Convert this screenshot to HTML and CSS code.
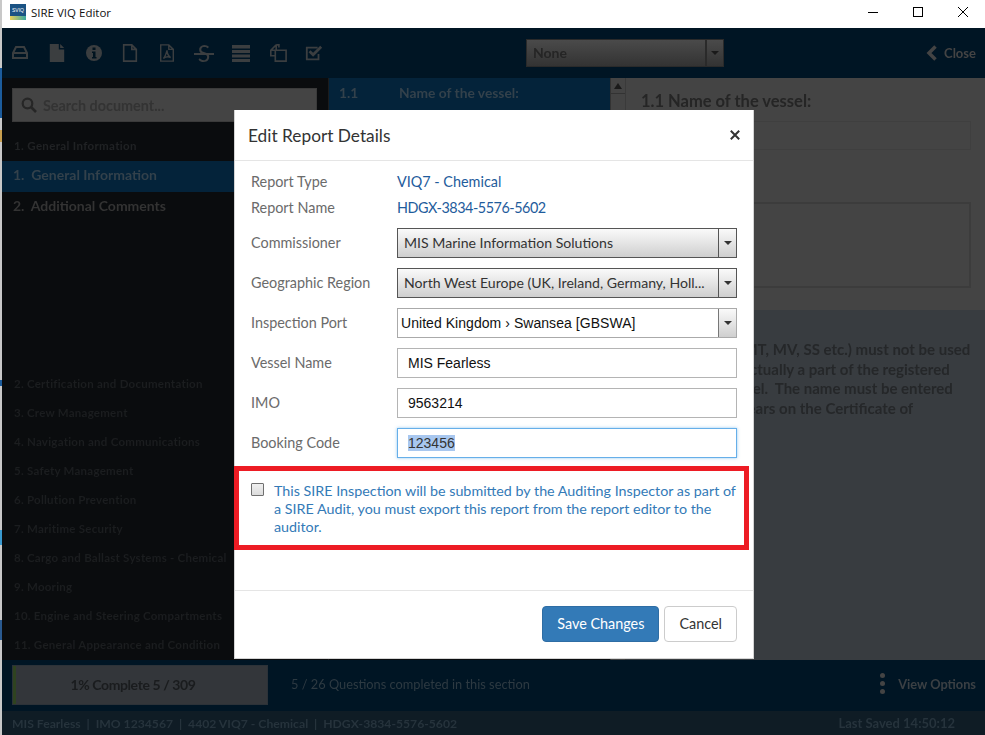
FILE: index.html
```html
<!DOCTYPE html>
<html lang="en">
<head>
<meta charset="utf-8">
<title>SIRE VIQ Editor</title>
<link rel="stylesheet" href="styles.css">
</head>
<body>
<div class="window">
  <div class="edge"></div>
  <div class="main">
    <header class="titlebar">
      <div class="logo"><span class="logo-text">SVIQ</span><span class="logo-swoosh"></span></div>
      <span class="app-title">SIRE VIQ Editor</span>
      <div class="win-controls">
        <span class="win-btn"><svg width="10" height="10" viewBox="0 0 10 10"><path d="M0 5.500h10" stroke="#000" fill="none"/></svg></span>
        <span class="win-btn"><svg width="10" height="10" viewBox="0 0 10 10"><rect x=".5" y=".5" width="9" height="9" stroke="#000" fill="none"/></svg></span>
        <span class="win-btn"><svg width="10" height="10" viewBox="0 0 10 10"><path d="M0 0l10 10M10 0L0 10" stroke="#000" stroke-width="1" fill="none"/></svg></span>
      </div>
    </header>
    <div class="app">
      <div class="toolbar">
        <div class="tools">
          <svg class="tool" viewBox="0 0 18 18"><path d="M5 3h8l3 6v5H2V9z M3 9h12" fill="none" stroke="#444" stroke-width="2"/></svg>
          <svg class="tool" viewBox="0 0 18 20"><path d="M1 0h10v6h6v14H1z M12.500 0l4.500 4.500h-4.500z" fill="#444"/></svg>
          <svg class="tool" viewBox="0 0 18 18"><circle cx="9" cy="9" r="8" fill="#444"/><path d="M7.500 3.500h3V6h-3z M7 7.500h3.500V13h1v1.500H7V13h1V9H7z" fill="#00131f"/></svg>
          <svg class="tool" viewBox="0 0 18 20"><path d="M2 1h9l5 5v13H2z M11 1v5h5" fill="none" stroke="#444" stroke-width="1.800"/></svg>
          <svg class="tool" viewBox="0 0 18 20"><path d="M2 1h9l5 5v13H2z M11 1v5h5 M9 7c-1 4-2 7-4 9 3-2 6-2 8-1-3-2-4-5-4-8z" fill="none" stroke="#444" stroke-width="1.600"/></svg>
          <span class="tool-s">S</span>
          <svg class="tool" viewBox="0 0 18 18"><path d="M0 1h18v3.500H0z M0 6h18v3H0z M0 10.500h18v3H0z M0 15h18v3H0z" fill="#444"/></svg>
          <svg class="tool" viewBox="0 0 20 20"><path d="M8 1L2 7v6h5 M8 1v6H2 M8 1h3v3 M8 7h11v12H7V7" fill="none" stroke="#444" stroke-width="1.800"/></svg>
          <svg class="tool" viewBox="0 0 20 18"><path d="M15 10v6H2V3h12" fill="none" stroke="#444" stroke-width="2"/><path d="M5 7l4 4 9-9" fill="none" stroke="#444" stroke-width="3"/></svg>
        </div>
        <div class="filter"><span class="filter-value">None</span><span class="filter-arrow"><span class="caret caret-dark"></span></span></div>
        <div class="close-link">
          <svg width="12" height="16" viewBox="0 0 12 16"><path d="M9.500 1.500L3 8l6.500 6.500" fill="none" stroke="#444" stroke-width="3.500"/></svg>
          <span>Close</span>
        </div>
      </div>
      <div class="workspace">
        <aside class="sidebar">
          <div class="search">
            <svg width="16" height="16" viewBox="0 0 16 16"><circle cx="6.500" cy="6.500" r="4.800" fill="none" stroke="#262626" stroke-width="2.200"/><path d="M10 10l5 5" stroke="#262626" stroke-width="2.600"/></svg>
            <span>Search document...</span>
          </div>
          <div class="chapter-head">1. General Information</div>
          <div class="section active">1.&nbsp; General Information</div>
          <div class="section">2.&nbsp; Additional Comments</div>
          <ul class="chapters">
            <li>2. Certification and Documentation</li>
            <li>3. Crew Management</li>
            <li>4. Navigation and Communications</li>
            <li>5. Safety Management</li>
            <li>6. Pollution Prevention</li>
            <li>7. Maritime Security</li>
            <li>8. Cargo and Ballast Systems - Chemical</li>
            <li>9. Mooring</li>
            <li>10. Engine and Steering Compartments</li>
            <li>11. General Appearance and Condition</li>
          </ul>
        </aside>
        <section class="questions">
          <div class="question-list">
            <div class="question-row"><span class="q-num">1.1</span><span>Name of the vessel:</span></div>
          </div>
          <div class="scrollbar"><span class="scroll-btn"><span class="caret caret-up"></span></span><span class="scroll-track"></span></div>
        </section>
        <section class="detail">
          <div class="detail-top">
            <h2 class="detail-title">1.1 Name of the vessel:</h2>
            <div class="answer"></div>
            <div class="comment"></div>
          </div>
          <div class="guidance">Ship's prefixes (MT, MV, SS etc.) must not be used<br>unless a title is actually a part of the registered<br>name of the vessel.&nbsp; The name must be entered<br>exactly as it appears on the Certificate of<br>Registry.</div>
        </section>
      </div>
      <div class="progress-bar">
        <div class="progress"><span class="progress-fill"></span><span class="progress-text">1% Complete 5 / 309</span></div>
        <span class="progress-note">5 / 26 Questions completed in this section</span>
        <div class="view-options"><span class="dots"><i></i><i></i><i></i></span><span>View Options</span></div>
      </div>
      <footer class="status">
        <span class="status-path">MIS Fearless &nbsp;|&nbsp; IMO 1234567 &nbsp;|&nbsp; 4402 VIQ7 - Chemical &nbsp;|&nbsp; HDGX-3834-5576-5602</span>
        <span>Last Saved 14:50:12</span>
      </footer>
    </div>
  </div>
</div>

<div class="modal">
  <div class="modal-head">
    <h1 class="modal-title">Edit Report Details</h1>
    <svg class="modal-close" width="10" height="10" viewBox="0 0 10 10"><path d="M.8.8l8.400 8.400M9.200.8L.8 9.200" stroke="#333" stroke-width="2" fill="none"/></svg>
  </div>
  <div class="modal-body">
    <div class="info-row"><span class="label">Report Type</span><span class="info-value">VIQ7 - Chemical</span></div>
    <div class="info-row"><span class="label">Report Name</span><span class="info-value code">HDGX-3834-5576-5602</span></div>
    <div class="form-row first"><span class="label">Commissioner</span>
      <div class="select"><span class="select-value">MIS Marine Information Solutions</span><span class="select-arrow"><span class="caret"></span></span></div></div>
    <div class="form-row"><span class="label">Geographic Region</span>
      <div class="select"><span class="select-value">North West Europe (UK, Ireland, Germany, Holl...</span><span class="select-arrow"><span class="caret"></span></span></div></div>
    <div class="form-row"><span class="label">Inspection Port</span>
      <div class="select combo"><span class="select-value">United Kingdom › Swansea [GBSWA]</span><span class="select-arrow"><span class="caret"></span></span></div></div>
    <div class="form-row"><span class="label">Vessel Name</span><div class="field">MIS Fearless</div></div>
    <div class="form-row"><span class="label">IMO</span><div class="field">9563214</div></div>
    <div class="form-row"><span class="label">Booking Code</span><div class="field focus"><span class="selected">123456</span></div></div>
    <div class="audit-box">
      <span class="checkbox"></span>
      <p class="audit-text">This SIRE Inspection will be submitted by the Auditing Inspector as part of a SIRE Audit, you must export this report from the report editor to the auditor.</p>
    </div>
  </div>
  <div class="modal-foot">
    <button class="btn btn-primary">Save Changes</button>
    <button class="btn">Cancel</button>
  </div>
</div>
</body>
</html>
```
FILE: styles.css
```css
* { box-sizing: border-box; }
html, body { margin: 0; height: 100%; overflow: hidden; }
body { font-family: "Lato", "Open Sans", sans-serif; font-size: 14.400px; background: #fff; }

.window { display: flex; width: 985px; height: 735px; }
.edge {
  width: 2px;
  background: linear-gradient(#c8c8c8 0 68px, #1c5c9c 68px 118px, #c8c8c8 118px 130px, #c9a050 130px 142px, #c8c8c8 142px 380px, #1c5c9c 380px 386px, #c8c8c8 386px 530px, #3a9ad0 530px 545px, #c8c8c8 545px 620px, #2a5a90 620px 640px, #c8c8c8 640px);
}
.main { flex: 1; display: flex; flex-direction: column; min-width: 0; }

/* Title bar */
.titlebar { height: 28px; display: flex; align-items: center; background: #fff; padding: 0 0 4px 8px; font-family: "Open Sans", sans-serif; }
.logo { position: relative; width: 16px; height: 16px; background: #1b5384; overflow: hidden; margin-right: 5px; }
.logo-text { display: block; font: 5px/12px "Liberation Sans", sans-serif; color: #fff; text-align: center; }
.logo-swoosh { display: block; height: 4px; background: linear-gradient(90deg, #e8cf5a, #38a8a0); }
.app-title { font-size: 11.500px; color: #111; }
.win-controls { margin-left: auto; display: flex; }
.win-btn { width: 45px; height: 24px; display: flex; align-items: center; justify-content: center; }

/* App */
.app { flex: 1; display: flex; flex-direction: column; min-height: 0; filter: blur(.55px); background: #001524; }
.toolbar { height: 50px; display: flex; align-items: center; background: #001524; padding: 0 9px 0 9px; }
.tools { display: flex; align-items: center; width: 515px; opacity: .88; }
.tool { width: 18px; height: 18px; margin-right: 18.800px; flex: none; }
.tool-s { position: relative; width: 18px; margin-right: 18.800px; font: 400 23px/18px "Lato", sans-serif; color: #444; text-align: center; }
.tool-s::after { content: ""; position: absolute; left: -1px; right: -1px; top: 9px; height: 2px; background: #444; }
.filter { width: 198px; height: 28px; display: flex; border: 1px solid #2a2a2a; background: linear-gradient(#4a4a4a, #333); color: #252525; }
.filter-value { flex: 1; padding-left: 6px; line-height: 26px; font-weight: 700; font-size: 14px; }
.filter-arrow { width: 18px; display: flex; align-items: center; justify-content: center; border-left: 2px solid #2a2a2a; }
.close-link { margin-left: auto; display: flex; align-items: center; gap: 6px; color: #444; font-weight: 700; font-size: 13px; }

.workspace { flex: 1; display: grid; grid-template-columns: 326px 297px 1fr; min-height: 0; }

/* Sidebar */
.sidebar { background: #0a0c0e; display: flex; flex-direction: column; min-height: 0; }
.search { margin: 10px 11px 0 10px; height: 34px; background: #444; border: 1px solid #3a3a3a; display: flex; align-items: center; gap: 6px; padding-left: 8px; color: #333; font-size: 14.400px; font-weight: 700; }
.chapter-head { margin-top: 15px; height: 24px; padding-left: 12px; line-height: 18px; font-size: 11.500px; font-weight: 700; color: #202224; letter-spacing: .35px; }
.section { height: 31px; padding-left: 11px; line-height: 28px; font-size: 14px; font-weight: 700; color: #333; }
.section.active { background: #04233a; color: #33414b; }
.chapters { list-style: none; margin: auto 0 0; padding: 0; }
.chapters li { height: 29px; padding-left: 12px; line-height: 28px; font-size: 11.500px; font-weight: 700; color: #1b1d1f; letter-spacing: .25px; white-space: nowrap; }

/* Questions */
.questions { display: flex; background: #0a0c0e; border-left: 1px solid #1c1c1c; }
.question-list { flex: 1; }
.question-row { height: 32px; display: flex; align-items: center; padding: 0 0 3px 10px; background: #04233a; color: #33414b; font-size: 13.800px; font-weight: 700; }
.q-num { width: 60px; }
.scrollbar { width: 15px; display: flex; flex-direction: column; background: #444; border-left: 1px solid #333; }
.scroll-btn { height: 16px; display: flex; align-items: center; justify-content: center; border-bottom: 1px solid #333; }
.scroll-track { flex: 1; }

/* Detail */
.detail { background: #444; display: flex; flex-direction: column; border-left: 1px solid #3a3a3a; }
.detail-top { height: 232px; padding: 13px 14px 0 15px; flex: none; }
.detail-title { margin: 0; font-size: 16.500px; line-height: 20px; font-weight: 700; color: #252525; white-space: nowrap; }
.answer { margin-top: 10px; height: 29px; border: 1px solid #3f3f3f; }
.comment { margin-top: 52px; height: 86px; border: 2px solid #3c3c3c; }
.guidance { flex: 1; background: #383c40; padding: 30px 0 0 15px; color: #252729; font-size: 15px; font-weight: 700; line-height: 19.500px; white-space: nowrap; overflow: hidden; }

/* Progress */
.progress-bar { height: 51px; display: flex; align-items: center; background: #001524; padding: 0 9px 0 10px; color: #2d3a42; font-size: 12.800px; }
.progress { width: 256px; height: 40px; margin-top: -2px; padding-right: 14px; position: relative; display: flex; align-items: center; justify-content: center; background: #33363a; border: 1px solid #2c3238; }
.progress-fill { position: absolute; left: 0; top: 0; bottom: 0; width: 3px; background: #2f4320; }
.progress-text { font-weight: 700; color: #1a1c1e; font-size: 14px; letter-spacing: -.4px; margin-top: -1px; }
.progress-note { margin-left: 23px; margin-top: -4px; }
.view-options { margin-left: auto; margin-top: -4px; display: flex; align-items: center; gap: 13px; color: #3b4044; font-weight: 700; font-size: 12.800px; }
.dots { display: flex; flex-direction: column; gap: 3px; }
.dots i { display: block; width: 5px; height: 5px; border-radius: 50%; background: #444; }
.status { height: 24px; display: flex; justify-content: space-between; align-items: center; padding: 0 30px 0 10px; background: #0f1c25; color: #26333c; font-size: 13px; font-weight: 700; }
.status-path { font-size: 12.200px; }

/* Carets */
.caret { width: 0; height: 0; border-left: 4px solid transparent; border-right: 4px solid transparent; border-top: 4px solid #333; }
.caret-dark { border-top-color: #1a1a1a; }
.caret-up { border-top: 0; border-bottom: 6px solid #1a1a1a; }

/* Modal */
.modal { position: absolute; left: 234px; top: 110px; width: 520px; height: 549px; background: #fff; border: 1px solid #d4d4d4; border-top: 0; display: flex; flex-direction: column; }
.modal-head { height: 51px; flex: none; display: flex; align-items: center; justify-content: space-between; padding: 0 13px 0 13px; border-bottom: 1px solid #e5e5e5; }
.modal-title { margin: 0; font-size: 17.300px; font-weight: 400; color: #333; }
.modal-body { flex: 1; padding: 8px 16px 0; }
.label { width: 146px; flex: none; color: #6b6b6b; padding-bottom: 2px; }
.info-row { height: 26px; display: flex; align-items: center; }
.info-value { color: #1f5c9c; padding-bottom: 2px; }
.info-value.code { letter-spacing: -.47px; }
.form-row { height: 30px; margin-top: 10px; display: flex; align-items: center; }
.form-row.first { margin-top: 7px; }
.select { width: 340px; height: 30px; display: flex; border: 1px solid #555; background: linear-gradient(#fafafa, #cfcfcf); }
.select-value { flex: 1; padding-left: 6px; line-height: 28px; font-size: 14.100px; color: #333; white-space: nowrap; overflow: hidden; }
.select-arrow { width: 18px; flex: none; display: flex; align-items: center; justify-content: center; border-left: 1px solid #555; }
.combo { border-color: #aaa; background: #fff; }
.combo .select-value { padding-left: 3px; font: 14px/29px "Liberation Sans", sans-serif; letter-spacing: .05px; color: #111; }
.combo .select-arrow { background: linear-gradient(#fafafa, #cfcfcf); border-left-color: #777; }
.field { width: 340px; height: 30px; border: 1px solid #b4b4b4; padding-left: 10px; font: 14px/28px "Liberation Sans", sans-serif; color: #111; }
.field.focus { border-color: #66afe9; box-shadow: 0 0 3px rgba(102, 175, 233, .7); color: #333; }
.selected { background: #a8c7ef; display: inline-block; line-height: 16px; }
.audit-box { margin: 8px 0 0 -17px; width: 515px; height: 84px; border: 5px solid #ed1c24; display: flex; gap: 10px; padding: 12px 0 0 12px; }
.checkbox { width: 13px; height: 13px; flex: none; border: 1px solid #707070; background: linear-gradient(#f0f0f0, #dcdcdc); border-radius: 1px; }
.audit-text { margin: -1px 0 0; color: #337ab7; font-size: 14.300px; line-height: 18px; width: 466px; }
.modal-foot { height: 68px; flex: none; border-top: 1px solid #e5e5e5; display: flex; justify-content: flex-end; align-items: flex-start; gap: 5px; padding: 15px 16px 0 0; }
.btn { height: 36px; padding: 0 14px 2px; font: inherit; color: #333; background: #fff; border: 1px solid #ccc; border-radius: 4px; }
.btn-primary { color: #fff; background: #337ab7; border-color: #2e6da4; }
```
